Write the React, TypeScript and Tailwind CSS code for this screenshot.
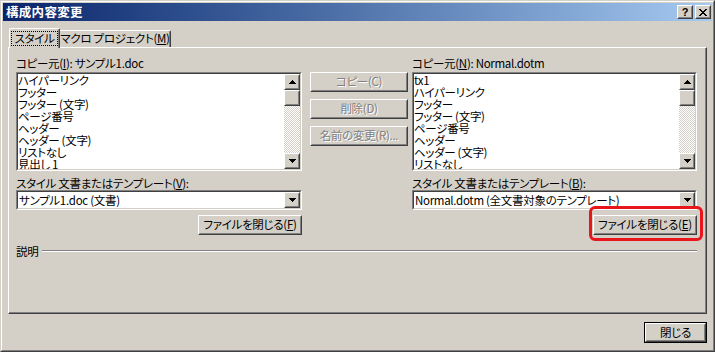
import type { ReactNode } from "react"

const upPath = "M3 0h1v1h1v1h1v1h1v1H0V3h1V2h1V1h1Z"
const downPath = "M0 0h7v1h-1v1h-1v1h-1v1h-1V3H2V2H1V1H0Z"

function Arrow({ down }: { down?: boolean }) {
  return (
    <svg width="7" height="4" viewBox="0 0 7 4" shapeRendering="crispEdges">
      <path d={down ? downPath : upPath} fill="#000" />
    </svg>
  )
}

function Raised({ className = "", children }: { className?: string; children?: ReactNode }) {
  return (
    <div className={"border border-t-white border-l-white border-r-[#404040] border-b-[#404040] bg-[#d4d0c8] " + className}>
      <div className="h-full w-full border border-t-[#d4d0c8] border-l-[#d4d0c8] border-r-[#808080] border-b-[#808080] flex items-center justify-center">
        {children}
      </div>
    </div>
  )
}

function Sunken({ className = "", children }: { className?: string; children?: ReactNode }) {
  return (
    <div className={"border border-t-[#808080] border-l-[#808080] border-r-white border-b-white " + className}>
      <div className="h-full w-full border border-t-[#404040] border-l-[#404040] border-r-[#d4d0c8] border-b-[#d4d0c8] bg-white flex">
        {children}
      </div>
    </div>
  )
}

function ListBox({ items }: { items: string[] }) {
  return (
    <Sunken className="h-[99px]">
      <div className="flex-1 overflow-hidden">
        {items.map((item, i) => (
          <div key={i} className="h-[12px] leading-[12px] text-[11.5px]">
            {item}
          </div>
        ))}
      </div>
      <div className="w-[16px] flex flex-col">
        <Raised className="h-[16px]">
          <Arrow />
        </Raised>
        <Raised className="h-[16px]" />
        <div className="flex-1 bg-[image:repeating-conic-gradient(#d4d0c8_0_25%,#ffffff_0_50%)] bg-[length:2px_2px]" />
        <Raised className="h-[16px]">
          <Arrow down />
        </Raised>
      </div>
    </Sunken>
  )
}

function Combo({ value }: { value: string }) {
  return (
    <Sunken className="h-[20px]">
      <div className="flex-1 pl-px leading-[16px] overflow-hidden">{value}</div>
      <Raised className="w-[16px] h-full">
        <Arrow down />
      </Raised>
    </Sunken>
  )
}

const leftItems = ["ハイパーリンク", "フッター", "フッター (文字)", "ページ番号", "ヘッダー", "ヘッダー (文字)", "リストなし", "見出し 1"]
const rightItems = ["tx1", "ハイパーリンク", "フッター", "フッター (文字)", "ページ番号", "ヘッダー", "ヘッダー (文字)", "リストなし"]

const disabled = "text-[#808080] [text-shadow:1px_1px_0_#ffffff]"

export default function App() {
  return (
    <div className="w-[715px] h-[352px] bg-[#d4d0c8] text-black text-[11.5px] tracking-[-0.3px] whitespace-nowrap font-['Noto_Sans_CJK_JP','Noto_Sans',sans-serif] [font-feature-settings:'palt'] border border-t-[#d4d0c8] border-l-[#d4d0c8] border-r-[#404040] border-b-[#404040] overflow-hidden">
      <div className="h-full border border-t-white border-l-white border-r-[#808080] border-b-[#808080] p-px flex flex-col">
        {/* title bar */}
        <div className="h-[18px] shrink-0 flex items-center pl-[3px] pr-[1px] bg-gradient-to-r from-[#0a246a] to-[#a6caf0]">
          <span className="text-white font-bold text-[12.5px] leading-[18px] tracking-[0.3px]">構成内容変更</span>
          <div className="ml-auto flex gap-[2px]">
            <Raised className="w-[16px] h-[14px]">
              <span className="font-['Liberation_Sans',sans-serif] font-bold text-[11px] leading-[10px] tracking-normal">?</span>
            </Raised>
            <Raised className="w-[16px] h-[14px]">
              <svg width="8" height="7" viewBox="0 0 8 7" shapeRendering="crispEdges">
                <path d="M0 0h2v1h1v1h2V1h1V0h2v1H7v1H6v1H5v1h1v1h1v1h1v1H6V6H5V5H3v1H2v1H0V6h1V5h1V4h1V3H2V2H1V1H0Z" fill="#000" />
              </svg>
            </Raised>
          </div>
        </div>

        <div className="flex-1 flex flex-col px-[5px]">
          {/* tabs */}
          <div className="mt-[7px] h-[19px] flex items-end pl-px">
            <div className="relative z-10 -mb-px h-[20px] w-[51px] bg-[#d4d0c8] border-t border-l border-t-white border-l-white border-r border-r-[#404040] rounded-t-[2px] shadow-[inset_-1px_0_#808080] flex items-center justify-center">
              <span className="border border-dotted border-black px-[2px] leading-[13px]">スタイル</span>
            </div>
            <div className="h-[17px] w-[111px] bg-[#d4d0c8] border-t border-t-white border-r border-r-[#404040] rounded-tr-[2px] shadow-[inset_-1px_0_#808080] flex items-center justify-center">
              マクロ プロジェクト(<u>M</u>)
            </div>
          </div>

          {/* panel */}
          <div className="h-[267px] border border-t-white border-l-white border-r-[#404040] border-b-[#404040]">
            <div className="h-full border-r border-b border-r-[#808080] border-b-[#808080] pt-[8px] pl-[7px] pr-[8px] flex flex-col">
              <div className="flex">
                {/* left */}
                <div className="w-[286px] flex flex-col">
                  <div className="h-[14px] leading-[14px] mb-[2px]">
                    コピー元(<u>I</u>): サンプル1.doc
                  </div>
                  <ListBox items={leftItems} />
                  <div className="h-[14px] leading-[14px] mt-[5px]">
                    スタイル 文書またはテンプレート(<u>V</u>):
                  </div>
                  <Combo value="サンプル1.doc (文書)" />
                  <div className="flex justify-end mt-[5px]">
                    <Raised className="w-[104px] h-[20px]">
                      <span>ファイルを閉じる(<u>F</u>)</span>
                    </Raised>
                  </div>
                </div>

                {/* middle */}
                <div className="ml-[8px] w-[98px] pt-[16px] flex flex-col gap-[7px]">
                  <Raised className="h-[20px]">
                    <span className={disabled}>コピー(C)</span>
                  </Raised>
                  <Raised className="h-[20px]">
                    <span className={disabled}>削除(D)</span>
                  </Raised>
                  <Raised className="h-[20px]">
                    <span className={disabled}>名前の変更(R)...</span>
                  </Raised>
                </div>

                {/* right */}
                <div className="ml-[4px] w-[285px] flex flex-col">
                  <div className="h-[14px] leading-[14px] mb-[2px]">
                    コピー元(<u>N</u>): Normal.dotm
                  </div>
                  <ListBox items={rightItems} />
                  <div className="h-[14px] leading-[14px] mt-[5px]">
                    スタイル 文書またはテンプレート(<u>B</u>):
                  </div>
                  <Combo value="Normal.dotm (全文書対象のテンプレート)" />
                  <div className="flex justify-end mt-[5px]">
                    <div className="relative">
                      <Raised className="w-[104px] h-[20px]">
                        <span>ファイルを閉じる(<u>E</u>)</span>
                      </Raised>
                      <div className="absolute left-[-4px] right-[-6px] top-[-9px] bottom-[-6px] border-[3px] border-[#e8151b] rounded-[6px] pointer-events-none" />
                    </div>
                  </div>
                </div>
              </div>

              {/* description */}
              <div className="mt-[9px] h-[14px] flex items-center">
                <span className="leading-[14px]">説明</span>
                <div className="flex-1 ml-[4px] border-t border-t-[#808080] border-b border-b-white" />
              </div>
            </div>
          </div>

          {/* bottom */}
          <div className="mt-[8px] flex justify-end">
            <div className="border border-black">
              <Raised className="w-[61px] h-[19px]">
                <span>閉じる</span>
              </Raised>
            </div>
          </div>
        </div>
      </div>
    </div>
  )
}
